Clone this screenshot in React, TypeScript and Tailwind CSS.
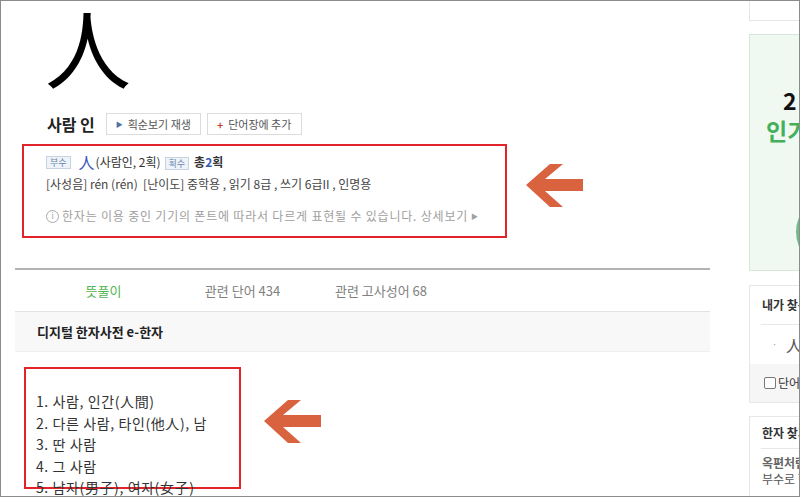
const font = { fontFamily: '"Noto Sans CJK KR", "Noto Sans", sans-serif' };

function Arrow({ className }: { className: string }) {
  return (
    <svg className={className} width="57" height="43" viewBox="0 0 57 43">
      <polygon points="0,21 24,0 37,0 19,15 57,15 57,27 19,27 37,43 24,43" fill="#d9633f" />
    </svg>
  );
}

function Badge({ children }: { children: string }) {
  return (
    <span className="inline-flex h-[13px] items-center border border-[#c6d3e2] bg-[#eef3f9] px-[3px] text-[9px] leading-none text-[#6a86ad]">
      {children}
    </span>
  );
}

const meanings = [
  "1. 사람, 인간(人間)",
  "2. 다른 사람, 타인(他人), 남",
  "3. 딴 사람",
  "4. 그 사람",
  "5. 남자(男子), 여자(女子)",
];

function Sidebar() {
  return (
    <div className="ml-[39px] w-[220px] shrink-0">
      <div className="h-[20px] border border-t-0 border-[#e6e6e6]" />

      <div className="relative mt-[13px] h-[237px] overflow-hidden border border-[#d6e6db] bg-[#eff8f1]">
        <div className="pl-[33px] pt-[50px] text-[23px] font-bold leading-[30px] text-[#111]">2 월의 한자</div>
        <div className="pl-[16px] text-[23px] font-bold leading-[30px] text-[#45b05a]">인기 급수 한자</div>
        <div className="absolute left-[46px] top-[160px] h-[74px] w-[74px] rounded-full bg-[#74b98c]" />
      </div>

      <div className="mt-[14px] h-[118px] border border-[#e6e6e6] bg-white">
        <div className="flex h-[38px] items-center pl-[12px] text-[12px] font-bold text-[#333]">내가 찾은 한자</div>
        <div className="mx-[11px] border-t border-[#e8e8e8]" />
        <div className="flex h-[39px] items-center pl-[22px] text-[13px] text-[#555]">
          <span className="text-[9px] text-[#999]">·</span>
          <span className="ml-[9px] text-[16px]">人</span>
        </div>
        <div className="flex h-[38px] items-center bg-[#f6f6f6] pl-[14px] text-[12px] text-[#333]">
          <span className="h-[12px] w-[12px] rounded-[2px] border border-[#777] bg-white" />
          <span className="ml-[2px]">단어장에 저장</span>
        </div>
      </div>

      <div className="mt-[13px] h-[100px] border border-[#e6e6e6] bg-white">
        <div className="flex h-[31px] items-center pl-[12px] text-[12px] font-bold text-[#333]">한자 찾기</div>
        <div className="mx-[11px] border-t border-[#e8e8e8]" />
        <div className="pl-[12px] pt-[6px] text-[12px] font-bold leading-[16px] text-[#666]">옥편처럼 부수, 획수로</div>
        <div className="pl-[12px] text-[12px] leading-[16px] text-[#555]">부수로 한자를 찾아보세요</div>
      </div>
    </div>
  );
}

export default function App() {
  return (
    <div className="relative flex h-[497px] w-[800px] overflow-hidden border border-[#8c8c8c] bg-white" style={font}>
      <div className="ml-[14px] w-[695px] shrink-0">
        <div className="h-[88px] pl-[30px] pt-[2px] text-[86px] leading-none text-black">人</div>

        <div className="mt-[24px] flex h-[22px] items-center pl-[32px]">
          <span className="text-[16px] font-bold text-[#222]">사람 인</span>
          <button className="ml-[11px] flex h-[22px] w-[95px] items-center justify-center gap-[5px] border border-[#dcdcdc] bg-white text-[11px] text-[#555]">
            <span className="text-[7px] text-[#4f6fa6]">▶</span>
            획순보기 재생
          </button>
          <button className="ml-[6px] flex h-[22px] w-[95px] items-center justify-center gap-[5px] border border-[#dcdcdc] bg-white text-[11px] text-[#555]">
            <span className="text-[10px] font-bold text-[#c0392b]">+</span>
            단어장에 추가
          </button>
        </div>

        <div className="ml-[7px] mt-[9px] h-[94px] w-[485px] border-2 border-[#e2232a] pl-[22px] pt-[7px]">
          <div className="flex h-[18px] items-center text-[12px] text-[#333]">
            <Badge>부수</Badge>
            <span className="ml-[8px] text-[16px] leading-none text-[#3559b5]">人</span>
            <span className="ml-[1px]">(사람인, 2획)</span>
            <span className="ml-[4px]"><Badge>획수</Badge></span>
            <span className="ml-[5px] font-bold">총<span className="text-[#3559b5]">2</span>획</span>
          </div>
          <div className="mt-[4px] flex h-[18px] items-center text-[12px] text-[#444]">
            [사성음] rén (rén)&nbsp;&nbsp;[난이도] 중학용 , 읽기 8급 , 쓰기 6급II , 인명용
          </div>
          <div className="mt-[14px] flex h-[18px] items-center text-[12px] tracking-[0.8px] text-[#a0a0a0]">
            <span className="flex h-[13px] w-[13px] items-center justify-center rounded-full border border-[#aaa] text-[8px] leading-none tracking-normal">i</span>
            <span className="ml-[3px]">한자는 이용 중인 기기의 폰트에 따라서 다르게 표현될 수 있습니다. 상세보기</span>
            <span className="ml-[3px] text-[7px]">▶</span>
          </div>
        </div>

        <div className="mt-[30px] border-t-2 border-[#b3b3b3]" />
        <div className="flex h-[42px] items-center border-b border-[#e3e3e3] pl-[19px] text-[13px] text-[#808080]">
          <span className="w-[139px] text-center text-[#52b44f]">뜻풀이</span>
          <span className="w-[139px] text-center">관련 단어 434</span>
          <span className="w-[134px] pl-[4px] text-center">관련 고사성어 68</span>
        </div>
        <div className="flex h-[40px] items-center border-b border-[#efefef] bg-[#f8f8f8] pl-[22px] text-[13px] font-bold text-[#222]">
          디지털 한자사전 e-한자
        </div>

        <div className="ml-[9px] mt-[15px] h-[122px] w-[217px] border-2 border-[#e2232a] pl-[10px] pt-[22px]">
          {meanings.map((m) => (
            <div key={m} className="whitespace-nowrap text-[14px] leading-[21.5px] tracking-[0.6px] text-[#333]">{m}</div>
          ))}
        </div>
      </div>

      <Sidebar />

      <Arrow className="absolute left-[525px] top-[163px]" />
      <Arrow className="absolute left-[263px] top-[399px]" />
    </div>
  );
}
